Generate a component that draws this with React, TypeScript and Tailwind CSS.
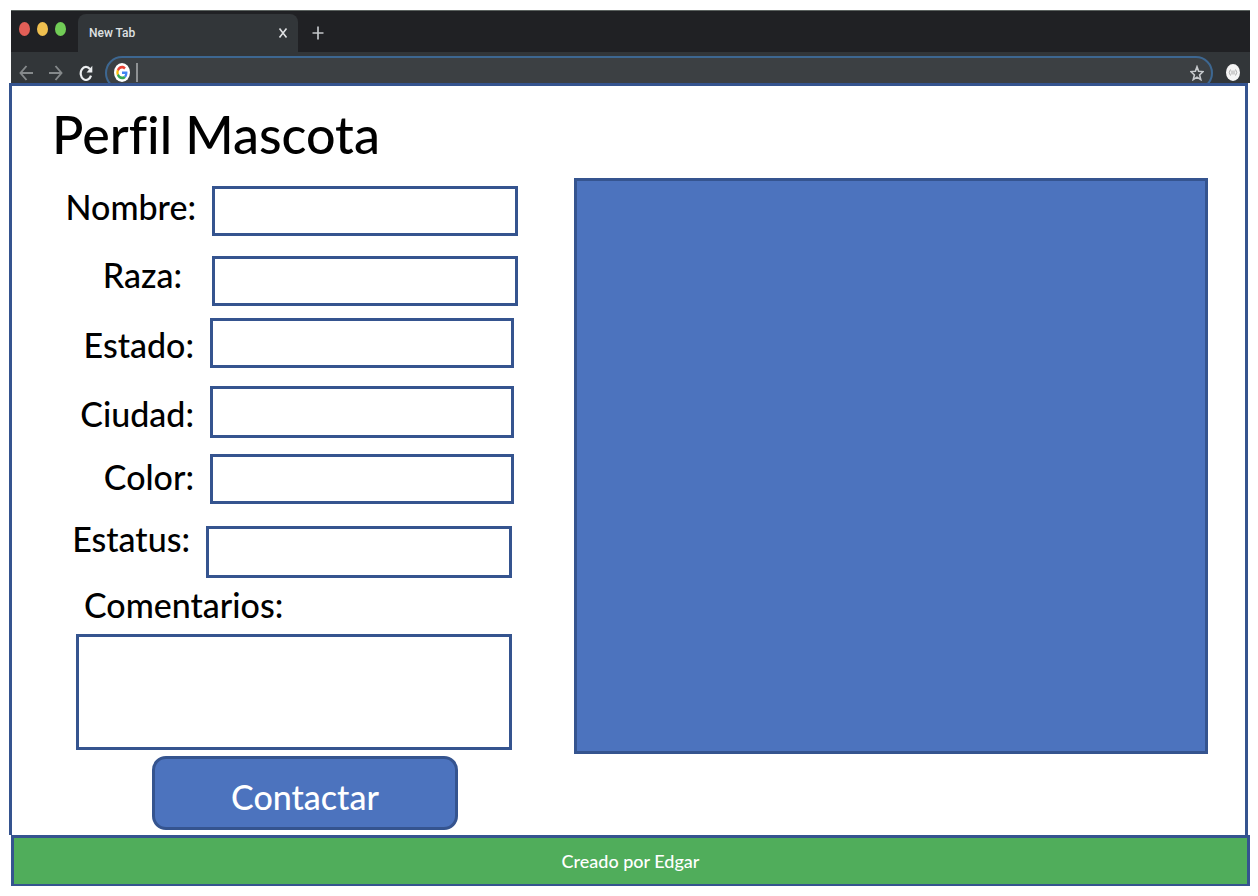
import React from "react";

type Field = {
  id: string;
  label: string;
  row: string;
  labelClass: string;
  inputClass: string;
};

const fields: Field[] = [
  { id: "nombre", label: "Nombre:", row: "items-center", labelClass: "w-[184px] pb-2", inputClass: "ml-4 w-[306px] h-[50px]" },
  { id: "raza", label: "Raza:", row: "mt-5 items-start", labelClass: "w-[170px]", inputClass: "ml-[30px] w-[306px] h-[50px]" },
  { id: "estado", label: "Estado:", row: "mt-3 items-center", labelClass: "w-[182px] pt-1", inputClass: "ml-4 w-[304px] h-[50px]" },
  { id: "ciudad", label: "Ciudad:", row: "mt-[18px] items-center", labelClass: "w-[182px] pt-1", inputClass: "ml-4 w-[304px] h-[52px]" },
  { id: "color", label: "Color:", row: "mt-4 items-center", labelClass: "w-[182px] pb-1", inputClass: "ml-4 w-[304px] h-[50px]" },
  { id: "estatus", label: "Estatus:", row: "mt-4 items-start", labelClass: "w-[178px]", inputClass: "ml-4 mt-1.5 w-[306px] h-[52px]" },
];

function GoogleMark() {
  return (
    <svg className="h-[19px] w-4 shrink-0" viewBox="0 0 48 48" preserveAspectRatio="none" aria-hidden="true">
      <ellipse cx="24" cy="24" rx="24" ry="24" fill="#fff" />
      <g transform="translate(7 7) scale(.71)">
        <path fill="#EA4335" d="M24 9.5c3.54 0 6.71 1.22 9.21 3.6l6.85-6.85C35.9 2.38 30.47 0 24 0 14.62 0 6.51 5.38 2.56 13.22l7.98 6.19C12.43 13.72 17.74 9.5 24 9.5z" />
        <path fill="#4285F4" d="M46.98 24.55c0-1.57-.15-3.09-.38-4.55H24v9.02h12.94c-.58 2.96-2.26 5.48-4.78 7.18l7.73 6c4.51-4.18 7.09-10.36 7.09-17.65z" />
        <path fill="#FBBC05" d="M10.53 28.59A14.5 14.5 0 0 1 9.77 24c0-1.6.27-3.14.76-4.59l-7.98-6.19A23.9 23.9 0 0 0 0 24c0 3.88.92 7.54 2.56 10.78l7.97-6.19z" />
        <path fill="#34A853" d="M24 48c6.48 0 11.93-2.13 15.89-5.81l-7.73-6c-2.15 1.45-4.92 2.3-8.16 2.3-6.26 0-11.57-4.22-13.47-9.91l-7.98 6.19C6.51 42.62 14.62 48 24 48z" />
      </g>
    </svg>
  );
}

function BrowserBar() {
  return (
    <header className="ml-0.5 h-[73px] overflow-hidden border-t border-[#5b625f] bg-[#323639] font-['Roboto',sans-serif]">
      <div className="flex h-[41px] bg-[#202124]">
        <div className="flex w-[67px] gap-[7px] pl-2 pt-[11px]">
          <span className="h-3.5 w-[11px] rounded-[50%] bg-[#e25f57]" />
          <span className="h-3.5 w-[11px] rounded-[50%] bg-[#f0c04f]" />
          <span className="h-3.5 w-[11px] rounded-[50%] bg-[#71cc56]" />
        </div>
        <div className="mt-[3px] flex w-[220px] items-center justify-between rounded-t-lg bg-[#323639] pl-[11px] pr-2.5 text-xs font-medium text-[#dfe1e3]">
          <span>New Tab</span>
          <button type="button" aria-label="Close tab" className="h-2.5 w-2.5">
            <svg className="block h-full w-full" viewBox="0 0 10 10" stroke="#e0e2e4" strokeWidth="1.6" preserveAspectRatio="none">
              <path d="M1.5 0.5 8.5 9.5M8.5 0.5 1.5 9.5" />
            </svg>
          </button>
        </div>
        <button type="button" aria-label="New tab" className="ml-3.5 mt-[15px] h-3.5 w-3">
          <svg className="block h-full w-full" viewBox="0 0 12 14" stroke="#c2c5c8" strokeWidth="1.7">
            <path d="M6 0.5v13M0.5 7h11" />
          </svg>
        </button>
      </div>
      <div className="flex h-10 items-center pr-2.5 pt-px">
        <button type="button" aria-label="Back" className="ml-2 h-4 w-[15px]">
          <svg className="block h-full w-full" viewBox="0 0 15 16" fill="none" stroke="#85898b" strokeWidth="1.9">
            <path d="M14 8H1.5M7.5 1 1.5 8l6 7" />
          </svg>
        </button>
        <button type="button" aria-label="Forward" className="ml-3.5 h-4 w-[15px]">
          <svg className="block h-full w-full" viewBox="0 0 15 16" fill="none" stroke="#85898b" strokeWidth="1.9">
            <path d="M1 8h12.5M7.500 1l6 7-6 7" />
          </svg>
        </button>
        <button type="button" aria-label="Reload" className="ml-4 h-4 w-3.5">
          <svg className="block h-full w-full" viewBox="0 0 14 16" fill="none">
            <path d="M11 4.200A5.300 6.500 0 1 0 12 10.600" stroke="#eceef0" strokeWidth="2.200" />
            <path d="M13.300 .8v6.600H7.600z" fill="#eceef0" />
          </svg>
        </button>
        <div className="ml-3 flex h-[34px] flex-1 items-center rounded-full border-2 border-[#3d6791] bg-[#3c4043] px-[7px]">
          <GoogleMark />
          <input aria-label="Address" className="ml-1.5 h-[19px] min-w-0 flex-1 border-l-2 border-[#8f9294] bg-transparent text-sm text-white outline-none" />
          <button type="button" aria-label="Bookmark" className="h-4 w-3.5">
            <svg className="block h-full w-full" viewBox="0 0 13 16" fill="none" stroke="#c6c9cc" strokeWidth="1.500" preserveAspectRatio="none">
              <path d="m6.500 1.800 1.500 4.500 4.200.3-3.300 3.300 1.100 4.700-3.500-2.500L3 14.600l1.100-4.700L.8 6.600 5 6.300z" />
            </svg>
          </button>
        </div>
        <svg className="ml-[13px] h-[17px] w-3.5" viewBox="0 0 14 17" aria-hidden="true">
          <ellipse cx="7" cy="8.500" rx="7" ry="8.500" fill="#f5f5f5" />
          <path d="M4.500 5.500Q2 8.500 4.500 11.500M9.500 5.500q2.500 3 0 6M6 6.500v4M8 6.500v4" fill="none" stroke="#aaa" />
        </svg>
      </div>
    </header>
  );
}

export default function App() {
  return (
    <div className="bg-white pb-2.5 pl-[9px] pr-2 pt-2.5 font-['Lato',sans-serif] font-medium text-black [font-variant-ligatures:none]">
      <BrowserBar />
      <main className="mr-0.5 flex border-x-3 border-t-3 border-[#35548f] pb-[5px]">
        <section className="w-[508px] shrink-0">
          <h1 className="pl-10 pt-3.5 text-[52px] font-medium leading-[68px]">Perfil Mascota</h1>
          <form className="pt-[18px]" onSubmit={(e) => e.preventDefault()}>
            {fields.map((f) => (
              <div key={f.id} className={"flex " + f.row}>
                <label htmlFor={f.id} className={"shrink-0 text-right text-[34px] leading-[38px] " + f.labelClass}>
                  {f.label}
                </label>
                <input id={f.id} className={"border-3 border-[#35548f] bg-white px-2 text-2xl outline-none " + f.inputClass} />
              </div>
            ))}
            <label htmlFor="comentarios" className="mt-2 block pl-[72px] text-[34px] leading-[38px]">
              Comentarios:
            </label>
            <textarea id="comentarios" className="ml-16 mt-2.5 block h-[116px] w-[436px] resize-none border-3 border-[#35548f] bg-white p-2 text-2xl outline-none" />
            <button type="submit" className="ml-[140px] mt-1.5 block h-[74px] w-[306px] rounded-[14px] border-3 border-[#35548f] bg-[#4c73be] pt-2 text-[34px] leading-[38px] text-white">
              Contactar
            </button>
          </form>
        </section>
        <div role="img" aria-label="Foto de la mascota" className="mb-[76px] ml-[54px] mr-[37px] mt-[92px] flex-1 border-3 border-[#35548f] bg-[#4c73be]" />
      </main>
      <footer className="ml-0.5 flex h-[51px] items-center justify-center border-3 border-b-2 border-[#35548f] bg-[#50ad5b] text-lg text-white">
        Creado por Edgar
      </footer>
    </div>
  );
}
